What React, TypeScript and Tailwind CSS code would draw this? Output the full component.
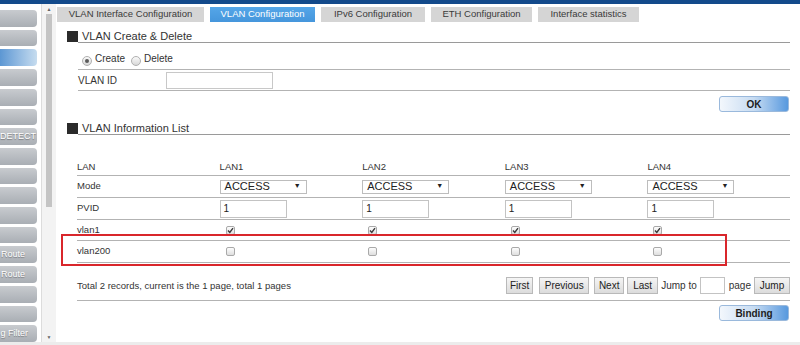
import React from 'react';

const sideItems: { label?: string; pr?: string; active?: boolean }[] = [
  {}, {}, { active: true }, {}, {}, {},
  { label: 'DETECT', pr: 'pr-[1px]' },
  {}, {}, {}, {}, {},
  { label: 'Route', pr: 'pr-[12px]' },
  { label: 'Route', pr: 'pr-[12px]' },
  {}, {},
  { label: 'g Filter', pr: 'pr-[9px]' },
];

const tabs = [
  { name: 'VLAN Interface Configuration', w: 'w-[147px]' },
  { name: 'VLAN Configuration', w: 'w-[105px]', active: true },
  { name: 'IPv6 Configuration', w: 'w-[104px]' },
  { name: 'ETH Configuration', w: 'w-[101px]' },
  { name: 'Interface statistics', w: 'w-[101px]' },
];

const lans = ['LAN1', 'LAN2', 'LAN3', 'LAN4'];

const SectionHeader = ({ title }: { title: string }) => (
  <div className="flex h-[12px]">
    <div className="w-[11px] h-[11px] bg-[#2b2b2b] shrink-0" />
    <div className="flex-1 h-[12px] border-b border-[#9a9a9a] pl-[4px] text-[11px] leading-[10px]">{title}</div>
  </div>
);

const Radio = ({ checked }: { checked?: boolean }) => (
  <span className="w-[10px] h-[10px] rounded-full border border-[#b0b0b0] bg-gradient-to-b from-[#fafafa] to-[#d8d8d8] flex items-center justify-center">
    {checked && <span className="w-[4px] h-[4px] rounded-full bg-[#5a5a5a]" />}
  </span>
);

const Check = ({ checked }: { checked?: boolean }) => (
  <span className="ml-[6px] w-[9px] h-[9px] rounded-[2px] border border-[#a9a9a9] bg-gradient-to-b from-[#fdfdfd] to-[#dedede] flex items-center justify-center">
    {checked && (
      <svg width="7" height="7" viewBox="0 0 7 7">
        <path d="M1 3.6 L2.8 5.4 L6 1.2" fill="none" stroke="#3a3a3a" strokeWidth="1.4" />
      </svg>
    )}
  </span>
);

const BlueButton = ({ label }: { label: string }) => (
  <div className="flex justify-end pr-[1px]">
    <div className="w-[70px] h-[16px] rounded-[3px] border border-[#9ab9dc] bg-gradient-to-r from-[#f3f7fc] via-[#c7dcf2] to-[#5799de] flex items-center justify-center font-bold text-[10px] text-[#1d1d1d]">
      {label}
    </div>
  </div>
);

const PageBtn = ({ label, w, ml }: { label: string; w: string; ml: string }) => (
  <div className={`${w} ${ml} h-[17px] border border-[#b9b9b9] bg-gradient-to-b from-[#f5f5f5] to-[#dcdcdc] flex items-center justify-center text-[10px] text-[#222]`}>
    {label}
  </div>
);

export default function App() {
  return (
    <div className="relative w-[800px] h-[345px] overflow-hidden bg-white text-[9.5px] text-[#333] font-['Liberation_Sans',Arial,sans-serif]">
      <div className="h-[4px] bg-[#134a8b]" />
      <div className="flex h-[338px]">
        <aside className="w-[41px] shrink-0 pt-[6px] flex flex-col gap-[3px]">
          {sideItems.map((s, i) => (
            <div
              key={i}
              className={`h-[17px] w-[37px] rounded-r-[4px] overflow-hidden flex items-center justify-end text-white [text-shadow:0_1px_1px_rgba(0,0,0,0.35)] ${
                s.active
                  ? 'bg-gradient-to-r from-[#5c97d3] to-[#c6dcef]'
                  : 'bg-gradient-to-b from-[#c8cbcf] to-[#a9aeb4]'
              }`}
            >
              {s.label && <span className={`whitespace-nowrap text-[9px] ${s.pr}`}>{s.label}</span>}
            </div>
          ))}
        </aside>
        <div className="w-[15px] shrink-0 border-l border-[#dcdcdc] bg-[#f3f3f3] flex flex-col items-center">
          <span className="text-[5px] leading-none text-[#666] mt-[3px]">▲</span>
          <div className="mt-[2px] w-[6px] h-[193px] bg-[#c4c4c4]" />
          <div className="flex-1" />
          <span className="text-[5px] leading-none text-[#666] mb-[2px]">▼</span>
        </div>
        <main className="flex-1 min-w-0">
          <div className="ml-[1px] mt-[3px] flex gap-[6px]">
            {tabs.map((t) => (
              <div
                key={t.name}
                className={`${t.w} h-[15px] flex items-center justify-center ${
                  t.active ? 'bg-gradient-to-b from-[#55a6e8] to-[#4596dc] text-white' : 'bg-[#d5d5d5] text-[#3a3a3a]'
                }`}
              >
                {t.name}
              </div>
            ))}
          </div>

          <div className="ml-[11px] mr-[10px]">
            <div className="mt-[9px]">
              <SectionHeader title="VLAN Create & Delete" />
            </div>
            <div className="ml-[11px]">
              <div className="h-[27px] flex items-end pb-[3px] border-b border-[#b3b3b3] pl-[4px] text-[10px]">
                <Radio checked />
                <span className="ml-[3px]">Create</span>
                <span className="ml-[6px]"><Radio /></span>
                <span className="ml-[3px]">Delete</span>
              </div>
              <div className="h-[21px] flex items-center border-b border-[#b3b3b3]">
                <span className="w-[88px] text-[10px]">VLAN ID</span>
                <div className="w-[107px] h-[17px] border border-[#c8c8c8] bg-white" />
              </div>
              <div className="mt-[5px]">
                <BlueButton label="OK" />
              </div>
            </div>

            <div className="mt-[11px]">
              <SectionHeader title="VLAN Information List" />
            </div>

            <div className="ml-[10px]">
              <div className="mt-[18px] h-[23px] grid grid-cols-5 items-end pb-[1px] border-b border-[#b3b3b3]">
                <span>LAN</span>
                {lans.map((l) => (
                  <span key={l}>{l}</span>
                ))}
              </div>
              <div className="h-[22px] grid grid-cols-5 items-center border-b border-[#b3b3b3]">
                <span>Mode</span>
                {lans.map((l) => (
                  <div key={l} className="w-[87px] h-[14px] border border-[#bdbdbd] bg-white flex items-center justify-between pl-[4px] pr-[5px] text-[11px] text-[#222]">
                    <span>ACCESS</span>
                    <span className="text-[7px]">▼</span>
                  </div>
                ))}
              </div>
              <div className="h-[22px] grid grid-cols-5 items-center border-b border-[#b3b3b3]">
                <span>PVID</span>
                {lans.map((l) => (
                  <div key={l} className="w-[67px] h-[18px] border border-[#c3c3c3] bg-white flex items-center pl-[3px] text-[10px] text-[#222]">
                    1
                  </div>
                ))}
              </div>
              <div className="h-[21px] grid grid-cols-5 items-center border-b border-[#b3b3b3]">
                <span>vlan1</span>
                {lans.map((l) => (
                  <div key={l} className="flex">
                    <Check checked />
                  </div>
                ))}
              </div>
              <div className="h-[22px] grid grid-cols-5 items-center border-b border-[#b3b3b3]">
                <span>vlan200</span>
                {lans.map((l) => (
                  <div key={l} className="flex">
                    <Check />
                  </div>
                ))}
              </div>

              <div className="pt-[14px] pb-[6px] border-b border-[#b3b3b3] flex items-center">
                <span className="flex-1 pt-[2px]">Total 2 records, current is the 1 page, total 1 pages</span>
                <PageBtn label="First" w="w-[27px]" ml="ml-0" />
                <PageBtn label="Previous" w="w-[50px]" ml="ml-[6px]" />
                <PageBtn label="Next" w="w-[30px]" ml="ml-[5px]" />
                <PageBtn label="Last" w="w-[31px]" ml="ml-[3px]" />
                <span className="ml-[3px] text-[10px]">Jump to</span>
                <div className="ml-[3px] w-[25px] h-[17px] border border-[#c3c3c3] bg-white" />
                <span className="ml-[4px] text-[10px]">page</span>
                <PageBtn label="Jump" w="w-[36px]" ml="ml-[3px]" />
              </div>
              <div className="mt-[4px]">
                <BlueButton label="Binding" />
              </div>
            </div>
          </div>
        </main>
      </div>
      <div className="h-[3px] bg-[#ececec]" />
      <div className="absolute left-[61px] top-[234px] w-[666px] h-[32px] border-2 border-[#d9262b] pointer-events-none" />
    </div>
  );
}
